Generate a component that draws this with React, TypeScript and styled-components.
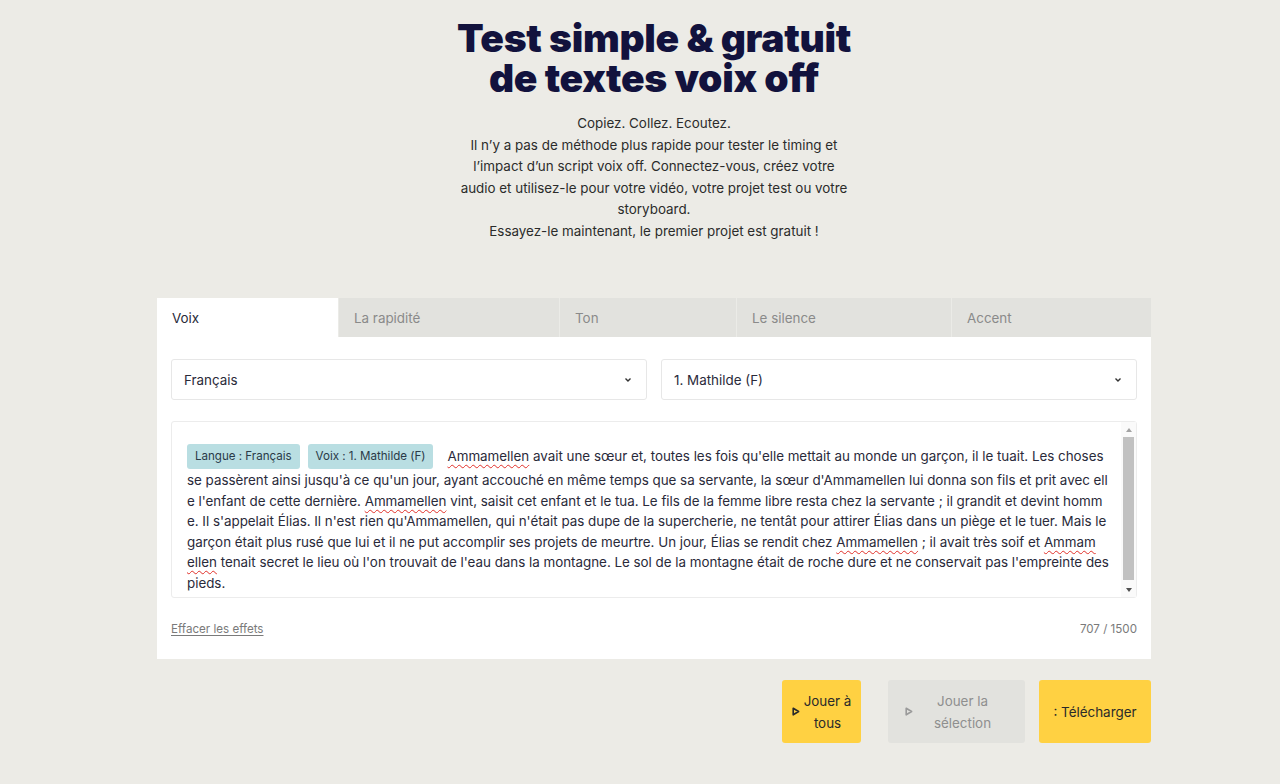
import React from "react";
import styled, { createGlobalStyle } from "styled-components";

const Global = createGlobalStyle`
  html, body { margin: 0; padding: 0; background: #ecebe6; }
  body { font-family: Inter, "Noto Sans", sans-serif; color: #2a2a3a; }
  * { box-sizing: border-box; }
`;

const Page = styled.div`
  width: 1280px;
  min-height: 784px;
  padding: 18px 0 40px 28px;
  display: flex;
  flex-direction: column;
  align-items: center;
`;

const Title = styled.h1`
  margin: 0;
  font-family: Inter, sans-serif;
  font-weight: 900;
  font-size: 39px;
  line-height: 40px;
  letter-spacing: -0.3px;
  color: #12123d;
  text-align: center;
`;

const TitleLine = styled.span`
  display: block;
`;

const Intro = styled.p`
  margin: 15px 0 0;
  width: 396px;
  font-size: 13.4px;
  line-height: 21.5px;
  color: #2b2b2b;
  text-align: center;
`;

const Card = styled.section`
  margin-top: 56px;
  width: 994px;
  background: #ffffff;
  display: flex;
  flex-direction: column;
`;

const Tabs = styled.div`
  display: flex;
  height: 39px;
  background: #ecebe6;
`;

const Tab = styled.div<{ $w: number; $active?: boolean }>`
  width: ${(p) => p.$w}px;
  display: flex;
  align-items: center;
  padding-left: 15px;
  font-size: 13.4px;
  color: ${(p) => (p.$active ? "#2a2a3a" : "#8a8a8a")};
  background: ${(p) => (p.$active ? "#ffffff" : "#e2e2de")};
  border-left: ${(p) => (p.$active ? "none" : "1px solid #ebebe7")};
`;

const Body = styled.div`
  padding: 22px 14px 0;
  display: flex;
  flex-direction: column;
`;

const Selects = styled.div`
  display: grid;
  grid-template-columns: 1fr 1fr;
  gap: 14px;
`;

const Select = styled.div`
  height: 41px;
  border: 1px solid #e7e7e7;
  border-radius: 3px;
  display: flex;
  align-items: center;
  justify-content: space-between;
  padding: 0 12px 0 12px;
  font-size: 13.4px;
  color: #2a2a3a;
`;

const Chevron = styled.svg`
  width: 8px;
  height: 6px;
  margin-right: 2px;
`;

const Editor = styled.div`
  margin-top: 21px;
  height: 177px;
  border: 1px solid #ececec;
  border-radius: 3px;
  display: flex;
`;

const EditorText = styled.div`
  flex: 1;
  padding: 20px 0 0 15px;
  font-size: 13.4px;
  letter-spacing: -0.02px;
  color: #2a2a3a;
  overflow: hidden;
`;

const FirstLine = styled.div`
  height: 28px;
  display: flex;
  align-items: center;
  white-space: nowrap;
`;

const Line = styled.div`
  height: 20.5px;
  line-height: 20.5px;
  white-space: nowrap;
`;

const Tag = styled.span`
  display: inline-flex;
  align-items: center;
  height: 25px;
  padding: 0 8px;
  margin-right: 8px;
  border-radius: 3px;
  background: #b9dee2;
  font-size: 11.6px;
  color: #2a3a48;
`;

const Lead = styled.span`
  margin-left: 6px;
`;

const Typo = styled.span`
  text-decoration: underline wavy #e0302a;
  text-decoration-thickness: 1px;
  text-underline-offset: 3px;
  text-decoration-skip-ink: none;
`;

const Scrollbar = styled.div`
  width: 15px;
  display: flex;
  flex-direction: column;
  align-items: center;
  background: #fafafa;
`;

const Arrow = styled.div<{ $down?: boolean }>`
  height: 15px;
  display: flex;
  align-items: center;
  justify-content: center;
  &::before {
    content: "";
    border-left: 3.5px solid transparent;
    border-right: 3.5px solid transparent;
    ${(p) => (p.$down ? "border-top: 4px solid #505050;" : "border-bottom: 4px solid #a3a3a3;")}
  }
`;

const Thumb = styled.div`
  width: 11px;
  flex: 1;
  background: #c1c1c1;
  margin-bottom: 2px;
`;

const Footer = styled.div`
  height: 61px;
  display: flex;
  align-items: center;
  justify-content: space-between;
  font-size: 11.6px;
  color: #7a7a7a;
`;

const ClearLink = styled.a`
  color: #7a7a7a;
  text-decoration: underline;
  text-underline-offset: 2px;
`;

const Actions = styled.div`
  width: 994px;
  margin-top: 21px;
  display: flex;
  justify-content: flex-end;
  gap: 14px;
`;

const Button = styled.button<{ $w: number; $disabled?: boolean; $gapLeft?: number; $pad?: number }>`
  width: ${(p) => p.$w}px;
  height: 63px;
  margin-left: ${(p) => p.$gapLeft || 0}px;
  border: none;
  border-radius: 3px;
  background: ${(p) => (p.$disabled ? "#e2e2de" : "#ffd142")};
  color: ${(p) => (p.$disabled ? "#8f8f8f" : "#2a2a2a")};
  font-family: Inter, sans-serif;
  font-size: 13.4px;
  line-height: 22px;
  display: flex;
  align-items: center;
  justify-content: center;
  gap: 4px;
  padding: 0 ${(p) => p.$pad ?? 8}px;
  cursor: pointer;
`;

const BtnText = styled.span`
  flex: 1;
  text-align: center;
  white-space: nowrap;
`;

const Play = styled.svg`
  width: 8px;
  height: 9px;
  flex: none;
`;

const PlayIcon = ({ color }: { color: string }) => (
  <Play viewBox="0 0 8 9">
    <path d="M1.2 1.2 L6.6 4.5 L1.2 7.8 Z" fill="none" stroke={color} strokeWidth="1.6" strokeLinejoin="round" />
  </Play>
);

const ChevronIcon = () => (
  <Chevron viewBox="0 0 8 6">
    <path d="M1.5 1.5 L4 4 L6.5 1.5" fill="none" stroke="#333" strokeWidth="1.4" />
  </Chevron>
);

export default function App() {
  return (
    <>
      <Global />
      <Page>
        <Title>
          <TitleLine>Test simple &amp; gratuit</TitleLine>
          <TitleLine>de textes voix off</TitleLine>
        </Title>
        <Intro>
          Copiez. Collez. Ecoutez.
          <br />
          Il n’y a pas de méthode plus rapide pour tester le timing et l’impact d’un script voix off. Connectez-vous, créez votre audio et utilisez-le pour votre vidéo, votre projet test ou votre storyboard.
          <br />
          Essayez-le maintenant, le premier projet est gratuit !
        </Intro>

        <Card>
          <Tabs>
            <Tab $w={181} $active>Voix</Tab>
            <Tab $w={221}>La rapidité</Tab>
            <Tab $w={177}>Ton</Tab>
            <Tab $w={215}>Le silence</Tab>
            <Tab $w={200}>Accent</Tab>
          </Tabs>
          <Body>
            <Selects>
              <Select>
                <span>Français</span>
                <ChevronIcon />
              </Select>
              <Select>
                <span>1. Mathilde (F)</span>
                <ChevronIcon />
              </Select>
            </Selects>
            <Editor>
              <EditorText>
                <FirstLine>
                  <Tag>Langue : Français</Tag>
                  <Tag>Voix : 1. Mathilde (F)</Tag>
                  <Lead>
                    <Typo>Ammamellen</Typo> avait une sœur et, toutes les fois qu'elle mettait au monde un garçon, il le tuait. Les choses
                  </Lead>
                </FirstLine>
                <Line>se passèrent ainsi jusqu'à ce qu'un jour, ayant accouché en même temps que sa servante, la sœur d'Ammamellen lui donna son fils et prit avec ell</Line>
                <Line>
                  e l'enfant de cette dernière. <Typo>Ammamellen</Typo> vint, saisit cet enfant et le tua. Le fils de la femme libre resta chez la servante ; il grandit et devint homm
                </Line>
                <Line>e. Il s'appelait Élias. Il n'est rien qu'Ammamellen, qui n'était pas dupe de la supercherie, ne tentât pour attirer Élias dans un piège et le tuer. Mais le</Line>
                <Line>
                  garçon était plus rusé que lui et il ne put accomplir ses projets de meurtre. Un jour, Élias se rendit chez <Typo>Ammamellen</Typo> ; il avait très soif et <Typo>Ammam</Typo>
                </Line>
                <Line>
                  <Typo>ellen</Typo> tenait secret le lieu où l'on trouvait de l'eau dans la montagne. Le sol de la montagne était de roche dure et ne conservait pas l'empreinte des
                </Line>
                <Line>pieds.</Line>
              </EditorText>
              <Scrollbar>
                <Arrow />
                <Thumb />
                <Arrow $down />
              </Scrollbar>
            </Editor>
            <Footer>
              <ClearLink>Effacer les effets</ClearLink>
              <span>707 / 1500</span>
            </Footer>
          </Body>
        </Card>

        <Actions>
          <Button $w={79} $pad={14}>
            <PlayIcon color="#2a2a2a" />
            <BtnText>
              Jouer à
              <br />
              tous
            </BtnText>
          </Button>
          <Button $w={137} $disabled $gapLeft={13} $pad={17}>
            <PlayIcon color="#9a9a9a" />
            <BtnText>
              Jouer la
              <br />
              sélection
            </BtnText>
          </Button>
          <Button $w={112}>
            <BtnText>: Télécharger</BtnText>
          </Button>
        </Actions>
      </Page>
    </>
  );
}
